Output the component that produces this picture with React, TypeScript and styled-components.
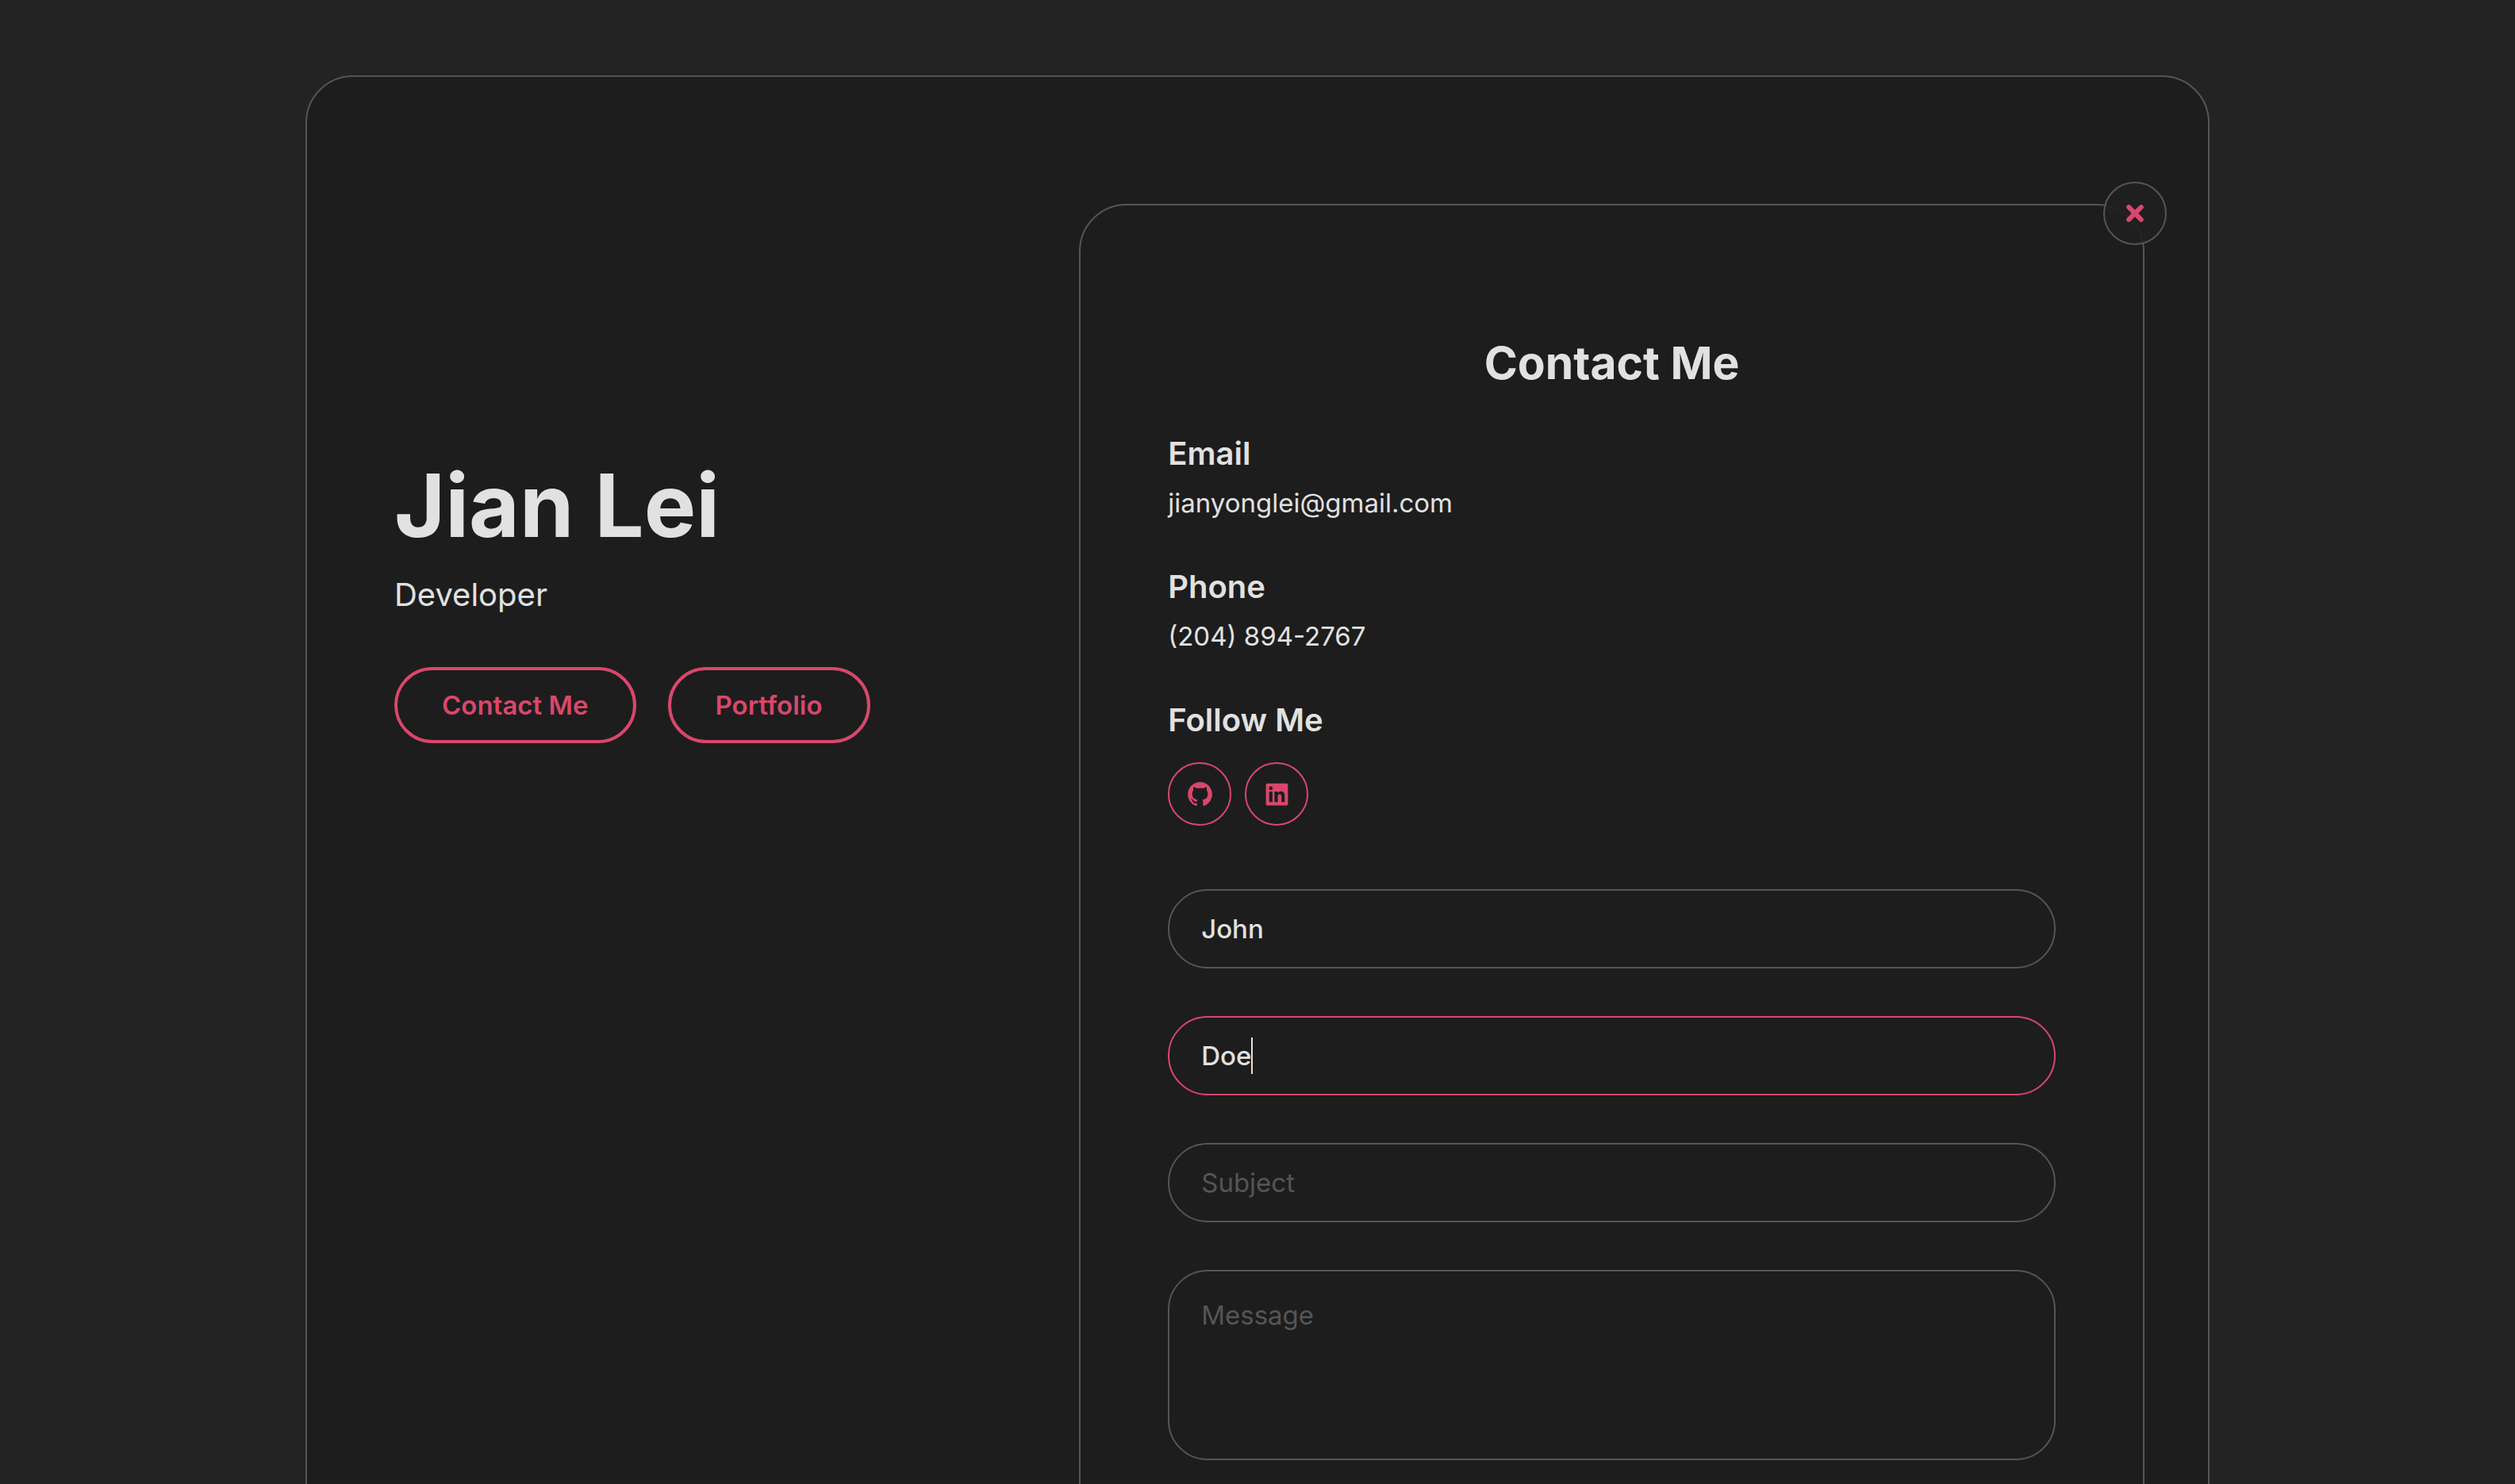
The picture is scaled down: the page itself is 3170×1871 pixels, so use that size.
import React, { useLayoutEffect, useRef, useState } from 'react';
import styled, { createGlobalStyle } from 'styled-components';
import { BiLogoGithub, BiLogoLinkedinSquare } from 'react-icons/bi';

const color = {
  page: '#232323',
  surface: '#1d1d1d',
  line: '#555555',
  text: '#e1e1e1',
  accent: '#d9476c',
};

const GlobalStyle = createGlobalStyle`
  *, *::before, *::after { box-sizing: border-box; margin: 0; padding: 0; }
  body {
    background: ${color.page};
    color: ${color.text};
    font-family: Inter, "Open Sans", sans-serif;
    font-size: 33px;
    font-weight: 400;
  }
  button, input, textarea { font: inherit; color: inherit; }
`;

const Page = styled.div`
  height: 100vh;
  padding: 95px 40px;
  overflow-y: auto;
  scrollbar-width: none;
`;

const Card = styled.main`
  display: grid;
  grid-template-columns: minmax(0, 9fr) minmax(0, 14fr);
  max-width: 2400px;
  margin: 0 auto;
  padding: 160px 80px 160px 110px;
  background: ${color.surface};
  border: 2px solid ${color.line};
  border-radius: 60px;
`;

const Hero = styled.section`
  padding-top: 313px;
`;

const Name = styled.h1`
  font-size: 110px;
  font-weight: 700;
  line-height: 134px;
`;

const Role = styled.p`
  margin-top: 16px;
  font-size: 40px;
  line-height: 60px;
`;

const Actions = styled.div`
  display: flex;
  flex-wrap: wrap;
  gap: 40px;
  margin-top: 61px;
`;

const PillButton = styled.button`
  height: 96px;
  padding: 0 56px;
  background: transparent;
  border: 4px solid ${color.accent};
  border-radius: 48px;
  color: ${color.accent};
  font-weight: 600;
  cursor: pointer;
`;

const Panel = styled.section`
  position: relative;
  padding: 164px 110px 110px;
  border: 2px solid ${color.line};
  border-radius: 60px;
`;

const CloseButton = styled.button`
  position: absolute;
  top: -30px;
  right: -30px;
  display: grid;
  place-items: center;
  width: 80px;
  height: 80px;
  background: rgba(32, 32, 32, 0.9);
  border: 2px solid ${color.line};
  border-radius: 50%;
  color: ${color.accent};
  cursor: pointer;
`;

const Title = styled.h2`
  margin-bottom: 48px;
  font-size: 57px;
  font-weight: 700;
  line-height: 70px;
  text-align: center;
`;

const Details = styled.div`
  display: grid;
  gap: 44px;
`;

const DetailHeading = styled.h3`
  font-size: 40px;
  font-weight: 600;
  line-height: 62px;
`;

const DetailText = styled.p`
  line-height: 62px;
`;

const Socials = styled.div`
  display: flex;
  gap: 17px;
  margin-top: 22px;
`;

const SocialLink = styled.a`
  display: grid;
  place-items: center;
  width: 80px;
  height: 80px;
  border: 2px solid ${color.accent};
  border-radius: 50%;
  color: ${color.accent};
  font-size: 37px;
`;

const Form = styled.form`
  display: grid;
  gap: 60px;
  margin-top: 80px;
`;

const FieldBox = styled.div`
  position: relative;
  display: grid;
`;

const Input = styled.input<{ $active: boolean }>`
  width: 100%;
  height: 100px;
  padding: 0 40px;
  background: transparent;
  border: 2px solid ${(p) => (p.$active ? color.accent : color.line)};
  border-radius: 50px;
  outline: none;
  font-weight: 500;
  caret-color: transparent;
  &::placeholder { color: ${color.line}; opacity: 1; font-weight: 400; }
`;

const MessageBox = styled.textarea<{ $active: boolean }>`
  width: 100%;
  height: 240px;
  padding: 30px 40px;
  background: transparent;
  border: 2px solid ${(p) => (p.$active ? color.accent : color.line)};
  border-radius: 50px;
  outline: none;
  font-weight: 500;
  line-height: 50px;
  resize: none;
  &::placeholder { color: ${color.line}; opacity: 1; font-weight: 400; }
`;

const Caret = styled.span`
  position: absolute;
  top: 27px;
  width: 2px;
  height: 46px;
  background: ${color.text};
  pointer-events: none;
`;

const CrossIcon = () => (
  <svg width="22" height="22" viewBox="0 0 22 22" fill="none" stroke="currentColor" strokeWidth="6" strokeLinecap="round" aria-hidden="true">
    <path d="M3.2 3.2 18.8 18.8M18.8 3.2 3.2 18.8" />
  </svg>
);

const TEXT_START = 42;

function TextField(props: {
  name: string;
  label: string;
  placeholder: string;
  initial?: string;
  active: boolean;
  onActivate: () => void;
}) {
  const [value, setValue] = useState(props.initial ?? '');
  const [caretX, setCaretX] = useState(TEXT_START);
  const input = useRef<HTMLInputElement>(null);

  useLayoutEffect(() => {
    const ctx = document.createElement('canvas').getContext('2d');
    if (!ctx || !input.current) return;
    const s = getComputedStyle(input.current);
    ctx.font = `${s.fontWeight} ${s.fontSize} ${s.fontFamily}`;
    setCaretX(TEXT_START + Math.round(ctx.measureText(value).width));
  }, [value]);

  return (
    <FieldBox>
      <Input
        ref={input}
        name={props.name}
        aria-label={props.label}
        placeholder={props.placeholder}
        value={value}
        $active={props.active}
        onFocus={props.onActivate}
        onChange={(e) => setValue(e.target.value)}
      />
      {props.active && <Caret style={{ left: caretX }} />}
    </FieldBox>
  );
}

export default function App() {
  const [active, setActive] = useState('lastName');
  const field = (name: string) => ({ name, active: active === name, onActivate: () => setActive(name) });

  return (
    <>
      <GlobalStyle />
      <Page>
        <Card>
          <Hero>
            <Name>Jian Lei</Name>
            <Role>Developer</Role>
            <Actions>
              <PillButton type="button">Contact Me</PillButton>
              <PillButton type="button">Portfolio</PillButton>
            </Actions>
          </Hero>

          <Panel>
            <CloseButton type="button" aria-label="Close">
              <CrossIcon />
            </CloseButton>
            <Title>Contact Me</Title>
            <Details>
              <div>
                <DetailHeading>Email</DetailHeading>
                <DetailText>jianyonglei@gmail.com</DetailText>
              </div>
              <div>
                <DetailHeading>Phone</DetailHeading>
                <DetailText>(204) 894-2767</DetailText>
              </div>
              <div>
                <DetailHeading>Follow Me</DetailHeading>
                <Socials>
                  <SocialLink href="#github" aria-label="GitHub">
                    <BiLogoGithub />
                  </SocialLink>
                  <SocialLink href="#linkedin" aria-label="LinkedIn">
                    <BiLogoLinkedinSquare />
                  </SocialLink>
                </Socials>
              </div>
            </Details>
            <Form>
              <TextField {...field('firstName')} label="First name" placeholder="First Name" initial="John" />
              <TextField {...field('lastName')} label="Last name" placeholder="Last Name" initial="Doe" />
              <TextField {...field('subject')} label="Subject" placeholder="Subject" />
              <MessageBox
                name="message"
                aria-label="Message"
                placeholder="Message"
                $active={active === 'message'}
                onFocus={() => setActive('message')}
              />
            </Form>
          </Panel>
        </Card>
      </Page>
    </>
  );
}
